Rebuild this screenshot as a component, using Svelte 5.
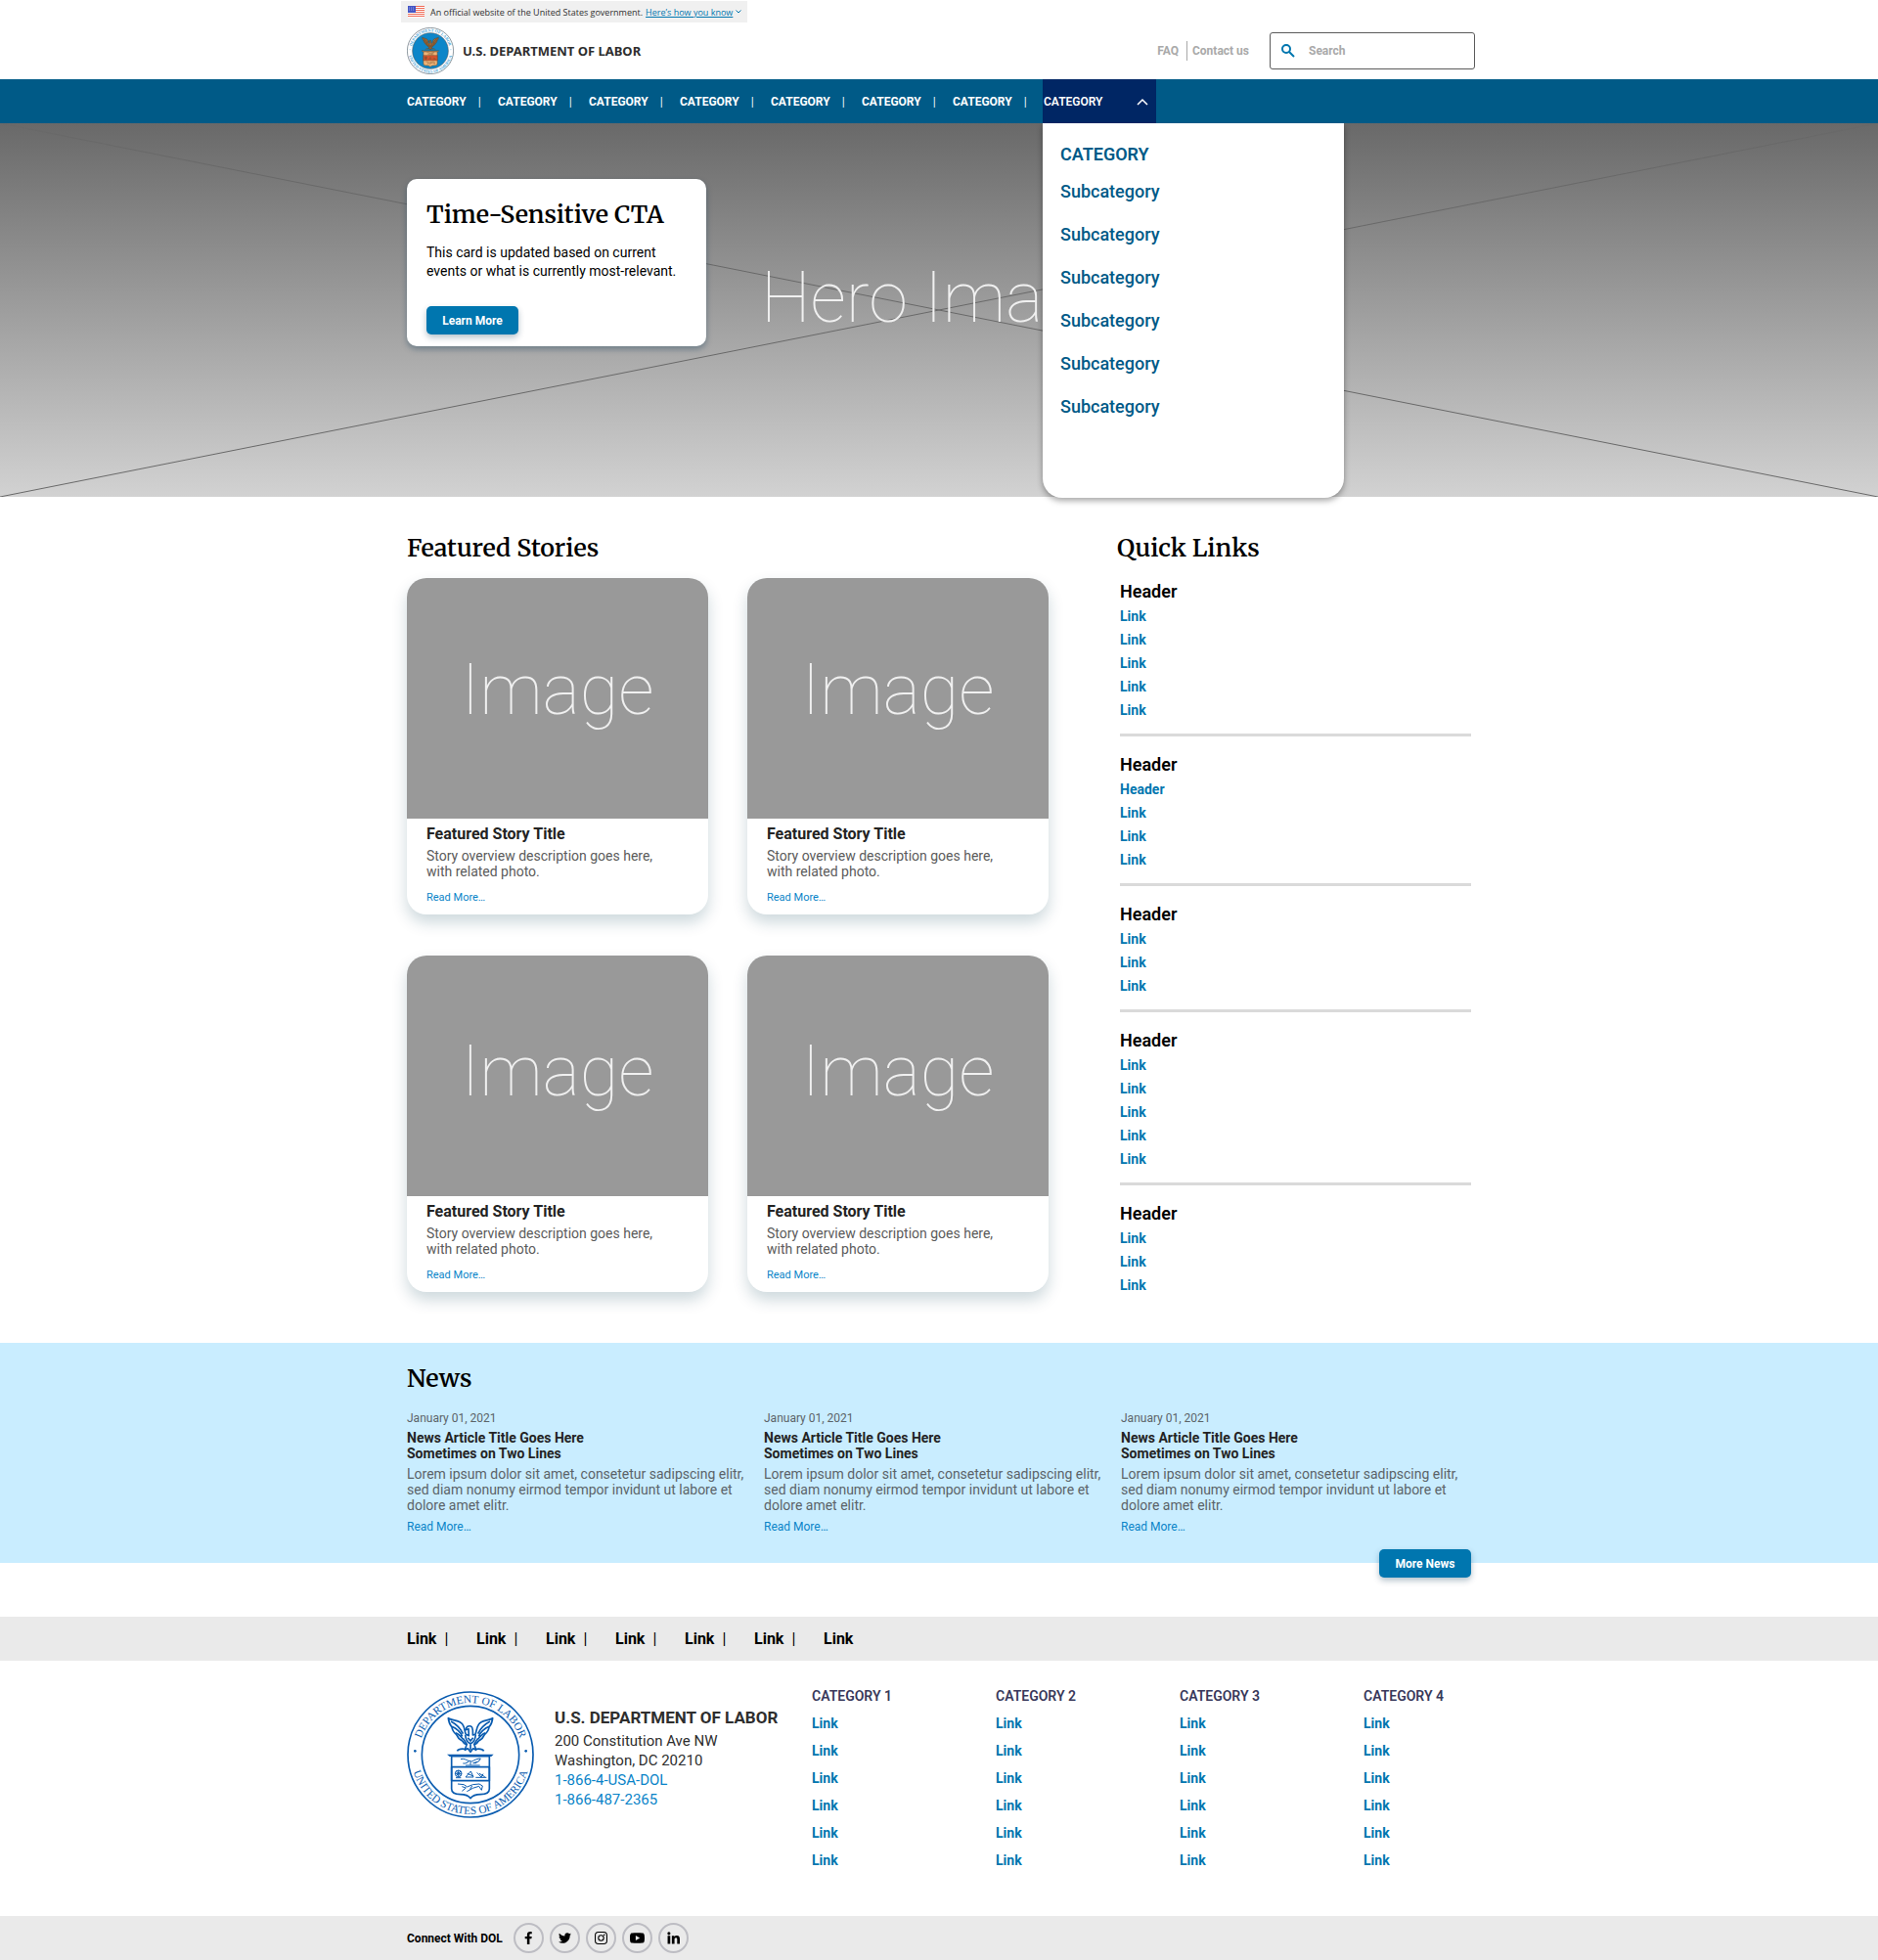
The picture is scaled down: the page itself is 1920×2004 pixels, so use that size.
<script>
  let menuOpen = $state(true);
  let query = $state('');

  const categories = Array(7).fill('CATEGORY');
  const subcategories = Array(6).fill('Subcategory');
  const stories = [1, 2, 3, 4];
  const quickLinks = [
    ['Link', 'Link', 'Link', 'Link', 'Link'],
    ['Header', 'Link', 'Link', 'Link'],
    ['Link', 'Link', 'Link'],
    ['Link', 'Link', 'Link', 'Link', 'Link'],
    ['Link', 'Link', 'Link']
  ];
  const articles = [1, 2, 3];
  const footerBar = Array(7).fill('Link');
  const footerColumns = ['CATEGORY 1', 'CATEGORY 2', 'CATEGORY 3', 'CATEGORY 4'];
  const footerLinks = Array(6).fill('Link');
</script>

{#snippet seal(name)}
  <svg class="seal {name}" viewBox="18 15 390 390" role="img" aria-label="Department of Labor seal">
    <defs>
      <path id="{name}-top" d="M54 210 A159 159 0 0 1 372 210" />
      <path id="{name}-bottom" d="M30 210 A183 183 0 0 0 396 210" />
    </defs>
    <circle class="ring" cx="213" cy="210" r="192" />
    <circle class="disc" cx="213" cy="210" r="149" />
    <text class="ring-text"><textPath href="#{name}-top" startOffset="50%">DEPARTMENT OF LABOR</textPath></text>
    <text class="ring-text"><textPath href="#{name}-bottom" startOffset="50%">UNITED STATES OF AMERICA</textPath></text>
    <circle class="dot" cx="43" cy="199" r="4" />
    <circle class="dot" cx="383" cy="199" r="4" />
    <g class="eagle">
      <path d="M145 98 C158 106 178 104 188 116 C196 126 194 138 199 148 L208 152 L207 131 L199 134 C199 124 207 121 214 123 C220 125 221 132 220 150 L228 148 C232 138 231 126 239 116 C248 104 268 106 281 98 C280 112 275 120 270 126 C269 136 263 143 256 149 C252 158 247 164 238 168 C234 175 229 178 225 180 L230 196 L221 191 L213 202 L205 191 L196 196 L201 180 C197 178 192 175 188 168 C179 164 174 158 170 149 C163 143 157 136 156 126 C151 120 146 112 145 98Z" />
      <path d="M153 108 C168 116 180 124 190 146 M156 124 C170 130 180 138 188 154 M167 143 C175 146 183 152 190 163 M273 108 C258 116 246 124 236 146 M270 124 C256 130 246 138 238 154 M259 143 C251 146 243 152 236 163" />
      <path d="M197 150 C199 166 206 174 213 176 C220 174 227 166 229 150 M205 158 L213 168 L221 158 M190 160 L203 180 M236 160 L223 180 M213 176 V196 M172 199 C177 190 188 192 197 193 M254 199 C249 190 238 192 229 193" />
    </g>
    <path class="shield" d="M155 215 H271 V315 C271 329 258 332 244 332 C230 332 219 336 213 344 C207 336 196 332 182 332 C168 332 155 329 155 315Z" />
    <path class="band" d="M155 248 H271 V290 H155Z" />
    <path class="bar" d="M141 209 H284 L277 216 H149Z" />
    <g class="charges">
      <path d="M183 224 C193 221 200 226 207 229 L217 231 C226 226 235 222 244 222 L238 231 L221 236 H232 M207 232 L197 237 H190 M213 232 V242 M198 243 H242" />
      <circle cx="176" cy="268" r="10" />
      <path d="M166 268 H186 M176 258 V278 M169 261 L183 275 M183 261 L169 275 M168 281 H184 M198 279 L214 261 L222 279Z M203 268 L222 276 M229 280 H262 M233 265 L246 279 L252 269 M240 268 L257 278" />
      <path d="M174 300 L193 302 L203 309 L220 302 L240 300 L250 306 L247 319 L239 307 L220 313 L202 323 M187 308 L199 312 L187 322 M218 306 L211 317" />
    </g>
  </svg>
{/snippet}

<div class="page">
  <header class="masthead">
    <div class="banner">
      <svg class="flag" viewBox="0 0 17 12" aria-hidden="true">
        <path fill="#fff" d="M0 0H17V12H0Z" />
        <path stroke="#ef6a55" d="M0 .5H17M0 2.500H17M0 4.500H17M0 6.500H17M0 8.500H17M0 10.500H17" />
        <path fill="#4556c4" d="M0 0H8V7H0Z" />
        <path stroke="#93a0e8" stroke-dasharray="1 1" d="M1 2H7M1 4H7" />
      </svg>
      <span>An official website of the United States government.</span>
      <a href="#about-site">Here’s how you know</a>
      <svg class="tiny-chevron" viewBox="0 0 6 4" aria-hidden="true"><path d="M0.5 0.5 3 3 5.5 0.5" /></svg>
    </div>
    <div class="brand-row">
      <a class="brand" href="#home">
        {@render seal('color')}
        <span>U.S. DEPARTMENT OF LABOR</span>
      </a>
      <div class="tools">
        <a href="#faq">FAQ</a>
        <a class="contact" href="#contact">Contact us</a>
        <label class="search">
          <svg viewBox="0 0 14 14" aria-hidden="true"><circle cx="5" cy="5" r="4" /><path d="M8 8 13 13" /></svg>
          <input type="search" placeholder="Search" aria-label="Search" bind:value={query} />
        </label>
      </div>
    </div>
  </header>

  <nav class="main-nav" aria-label="Main">
    <ul class="wrap">
      {#each categories as category}
        <li><a href="#category">{category}</a><span class="pipe">|</span></li>
      {/each}
      <li class="menu">
        <button class="menu-toggle" aria-expanded={menuOpen} onclick={() => (menuOpen = !menuOpen)}>
          CATEGORY
          <svg viewBox="0 0 12 8" aria-hidden="true"><path d="M1 7 6 2 11 7" /></svg>
        </button>
        {#if menuOpen}
          <div class="dropdown">
            <h2>CATEGORY</h2>
            {#each subcategories as sub}
              <a href="#subcategory">{sub}</a>
            {/each}
          </div>
        {/if}
      </li>
    </ul>
  </nav>

  <section class="hero">
    <svg class="cross" viewBox="0 0 100 100" preserveAspectRatio="none" aria-hidden="true">
      <path d="M0 0 100 100M0 100 100 0" />
    </svg>
    <div class="placeholder hero-label">Hero Image</div>
    <div class="wrap hero-content">
      <article class="cta">
        <h1>Time-Sensitive CTA</h1>
        <p>This card is updated based on current events or what is currently most-relevant.</p>
        <button class="primary">Learn More</button>
      </article>
    </div>
  </section>

  <main class="wrap main">
    <section class="featured">
      <h2 class="title">Featured Stories</h2>
      <div class="stories">
        {#each stories as story (story)}
          <article class="story">
            <div class="placeholder photo">Image</div>
            <div class="story-text">
              <h3>Featured Story Title</h3>
              <p>Story overview description goes here, with related photo.</p>
              <a href="#story">Read More…</a>
            </div>
          </article>
        {/each}
      </div>
    </section>
    <aside class="quick">
      <h2 class="title">Quick Links</h2>
      {#each quickLinks as group}
        <section>
          <h3>Header</h3>
          <ul>
            {#each group as link}
              <li><a href="#link">{link}</a></li>
            {/each}
          </ul>
        </section>
      {/each}
    </aside>
  </main>

  <section class="news">
    <div class="wrap news-inner">
      <h2 class="title">News</h2>
      <div class="articles">
        {#each articles as article (article)}
          <article>
            <time datetime="2021-01-01">January 01, 2021</time>
            <h3>News Article Title Goes Here<br />Sometimes on Two Lines</h3>
            <p>Lorem ipsum dolor sit amet, consetetur sadipscing elitr, sed diam nonumy eirmod tempor invidunt ut labore et dolore amet elitr.</p>
            <a href="#article">Read More…</a>
          </article>
        {/each}
      </div>
      <button class="primary more">More News</button>
    </div>
  </section>

  <nav class="link-bar" aria-label="Footer">
    <ul class="wrap">
      {#each footerBar as link, i}
        <li><a href="#link">{link}</a>{#if i < footerBar.length - 1}<span>|</span>{/if}</li>
      {/each}
    </ul>
  </nav>

  <footer>
    <div class="wrap footer-main">
      {@render seal('line')}
      <address>
        <strong>U.S. DEPARTMENT OF LABOR</strong>
        <span>200 Constitution Ave NW</span>
        <span>Washington, DC 20210</span>
        <a href="tel:1-866-487-2365">1-866-4-USA-DOL</a>
        <a href="tel:1-866-487-2365">1-866-487-2365</a>
      </address>
      <div class="columns">
        {#each footerColumns as column}
          <section>
            <h3>{column}</h3>
            <ul>
              {#each footerLinks as link}
                <li><a href="#link">{link}</a></li>
              {/each}
            </ul>
          </section>
        {/each}
      </div>
    </div>
    <div class="social-bar">
      <div class="wrap social">
        <span>Connect With DOL</span>
        <a href="#facebook" aria-label="Facebook">
          <svg viewBox="0 0 24 24"><path d="M9 24V13.5H5V9h4V5.8C9 1.9 11.300 0 14.800 0c1.600 0 3.200.3 3.200.3V4h-2c-1.900 0-2.300 1-2.300 2.300V9H18l-.7 4.500h-3.600V24Z" /></svg>
        </a>
        <a href="#twitter" aria-label="Twitter">
          <svg viewBox="0 0 24 24"><path d="M23.953 4.570a10 10 0 01-2.825.775 4.958 4.958 0 002.163-2.723c-.951.555-2.005.959-3.127 1.184a4.920 4.920 0 00-8.384 4.482C7.690 8.095 4.067 6.130 1.640 3.162a4.822 4.822 0 00-.666 2.475c0 1.710.870 3.213 2.188 4.096a4.904 4.904 0 01-2.228-.616v.060a4.923 4.923 0 003.946 4.827 4.996 4.996 0 01-2.212.085 4.936 4.936 0 004.604 3.417 9.867 9.867 0 01-6.102 2.105c-.390 0-.779-.023-1.170-.067a13.995 13.995 0 007.557 2.209c9.053 0 13.998-7.496 13.998-13.985 0-.210 0-.420-.015-.630A9.935 9.935 0 0024 4.590z" /></svg>
        </a>
        <a href="#instagram" aria-label="Instagram">
          <svg viewBox="0 0 24 24"><rect class="outline" x="1" y="1" width="22" height="22" rx="6" /><circle class="outline" cx="12" cy="12" r="5" /><circle cx="18" cy="6" r="1.500" /></svg>
        </a>
        <a href="#youtube" aria-label="YouTube">
          <svg class="wide" viewBox="0 0 28 20"><path fill-rule="evenodd" d="M4 .5C10 0 18 0 24 .5 27 .8 28 3 28 10s-1 9.200-4 9.500C18 20 10 20 4 19.500 1 19.200 0 17 0 10S1 .8 4 .5ZM11 5.500v9l8-4.500Z" /></svg>
        </a>
        <a href="#linkedin" aria-label="LinkedIn">
          <svg viewBox="0 0 24 24"><path d="M1 8H6V23H1ZM3.500 .5a2.900 2.900 0 1 1 0 5.800 2.900 2.900 0 0 1 0-5.800ZM9 8h4.800v2.100c.8-1.500 2.500-2.500 4.700-2.500C22.700 7.600 24 10.200 24 14.300V23h-5v-7.800c0-1.900-.1-3.500-2.300-3.500S14 13.300 14 15.200V23H9Z" /></svg>
        </a>
      </div>
    </div>
  </footer>
</div>

<style>
  :global(body) {
    margin: 0;
    background: #fff;
  }

  .page {
    font-family: Roboto, 'Liberation Sans', sans-serif;
    font-size: 14px;
    color: #000;
  }

  h1, h2, h3, p, ul {
    margin: 0;
    padding: 0;
  }

  ul {
    list-style: none;
  }

  a {
    color: #0076af;
    text-decoration: none;
  }

  button {
    border: 0;
    font-family: inherit;
    cursor: pointer;
  }

  svg {
    display: block;
    flex: none;
  }

  .wrap {
    box-sizing: border-box;
    width: 100%;
    max-width: 1088px;
    margin: 0 auto;
  }

  .title, .cta h1 {
    font-family: Merriweather, 'Liberation Serif', serif;
    font-size: 25px;
    line-height: 32px;
    font-weight: 600;
  }

  .placeholder {
    color: #f0f0f0;
    font-size: 72px;
    line-height: 84px;
    font-weight: 100;
  }

  .primary {
    min-width: 94px;
    height: 29px;
    padding: 0 16px;
    border-radius: 5px;
    background: #0076af;
    color: #fff;
    font-size: 12px;
    font-weight: 700;
    box-shadow: 0 3px 6px rgba(0, 50, 80, 0.3);
  }

  /* Masthead */
  .masthead {
    box-sizing: border-box;
    max-width: 1100px;
    margin: 0 auto;
    padding: 1px 2px 5px 0;
  }

  .banner {
    display: flex;
    align-items: center;
    box-sizing: border-box;
    width: max-content;
    height: 22px;
    padding: 0 6px 0 7px;
    background: #f0f0f0;
    color: #2e2e2e;
    font-family: 'Source Sans Pro', 'Open Sans', sans-serif;
    font-size: 9px;
  }

  .banner a {
    margin: 0 3px;
    text-decoration: underline;
  }

  .flag {
    width: 17px;
    height: 12px;
    margin-right: 6px;
  }

  .tiny-chevron {
    width: 6px;
    height: 4px;
    fill: none;
    stroke: #0076af;
  }

  .brand-row {
    display: flex;
    justify-content: space-between;
    align-items: center;
    height: 49px;
    margin-top: 4px;
    padding-left: 6px;
  }

  .brand {
    display: flex;
    align-items: center;
    gap: 9px;
    color: #2e2e2e;
    font-family: 'Source Sans Pro', 'Noto Sans', sans-serif;
    font-size: 13px;
    font-weight: 700;
  }

  .tools {
    display: flex;
    align-items: center;
    font-size: 12px;
    font-weight: 700;
  }

  .tools a {
    color: #a9a9a9;
    line-height: 20px;
  }

  .tools .contact {
    margin: 0 21px 0 8px;
    padding-left: 5px;
    border-left: 1px solid #a9a9a9;
  }

  .search {
    display: flex;
    align-items: center;
    gap: 14px;
    box-sizing: border-box;
    width: 210px;
    height: 38px;
    padding: 0 11px;
    border: 1px solid #5b5b5b;
    border-radius: 3px;
  }

  .search svg {
    width: 14px;
    height: 14px;
    fill: none;
    stroke: #0076af;
    stroke-width: 2;
  }

  .search input {
    flex: 1;
    min-width: 0;
    padding: 0;
    border: 0;
    outline: 0;
    background: none;
    font: inherit;
  }

  .search input::placeholder {
    color: #a9a9a9;
    opacity: 1;
  }

  /* Seal */
  .seal .ring, .seal .disc {
    fill: #fff;
    stroke-width: 5;
  }

  .ring-text {
    font-family: 'Liberation Serif', serif;
    font-size: 34px;
    text-anchor: middle;
  }

  .seal path {
    stroke-linejoin: round;
  }

  .line {
    width: 130px;
    height: 130px;
  }

  .line .ring, .line .disc {
    stroke: #0a5cb0;
  }

  .line .ring-text, .line .dot, .line .bar {
    fill: #0a5cb0;
  }

  .line .eagle, .line .shield, .line .band, .line .charges {
    fill: none;
    stroke: #0a5cb0;
    stroke-width: 5;
  }

  .line .charges {
    stroke-width: 3;
  }

  .color {
    width: 48px;
    height: 48px;
  }

  .color .ring, .color .disc {
    stroke: #4d5d68;
  }

  .color .disc {
    fill: #0c86c9;
  }

  .color .ring-text, .color .dot {
    fill: #4aa5d8;
  }

  .color .eagle {
    fill: #9a6a3c;
    stroke: #50381f;
    stroke-width: 3;
  }

  .color .shield, .color .bar {
    fill: #eeb377;
    stroke: #5c4020;
    stroke-width: 4;
  }

  .color .band {
    fill: #d9552f;
    stroke: #5c4020;
    stroke-width: 3;
  }

  .color .charges {
    fill: none;
    stroke: #74502c;
    stroke-width: 3;
  }

  /* Main navigation */
  .main-nav {
    background: #005a87;
  }

  .main-nav ul {
    display: flex;
    height: 45px;
  }

  .main-nav li {
    display: flex;
    align-items: center;
    width: 93px;
    font-size: 12px;
    font-weight: 700;
  }

  .main-nav li > a {
    color: #fff;
  }

  .pipe {
    margin-left: 12px;
    color: #e4f0f5;
    font-weight: 500;
  }

  .main-nav .menu {
    position: relative;
    width: 116px;
    margin-left: -1px;
  }

  .menu-toggle {
    display: flex;
    align-items: center;
    justify-content: space-between;
    width: 100%;
    height: 100%;
    padding: 0 8px 0 1px;
    background: #002664;
    color: #fff;
    font-size: 12px;
    font-weight: 600;
  }

  .menu-toggle svg {
    width: 12px;
    height: 8px;
    fill: none;
    stroke: #fff;
    stroke-width: 1.5;
  }

  .dropdown {
    position: absolute;
    z-index: 2;
    top: 100%;
    left: 0;
    display: flex;
    flex-direction: column;
    box-sizing: border-box;
    width: 308px;
    padding: 16px 18px 71px;
    border-radius: 0 0 20px 20px;
    background: #fff;
    color: #005a87;
    font-size: 18px;
    box-shadow: 0 3px 6px rgba(0, 0, 0, 0.35);
    clip-path: inset(0 -12px -12px);
  }

  .dropdown h2 {
    font-size: 18px;
    line-height: 32px;
    font-weight: 600;
  }

  .dropdown a {
    color: #005a87;
    line-height: 44px;
    font-weight: 500;
  }

  /* Hero */
  .hero {
    position: relative;
    background: linear-gradient(#696969, #d2d2d2);
  }

  .cross {
    position: absolute;
    inset: 0;
    width: 100%;
    height: 100%;
    fill: none;
    stroke: #696969;
  }

  .cross path {
    vector-effect: non-scaling-stroke;
  }

  .hero-label {
    position: absolute;
    inset: 0 0 24px;
    display: grid;
    place-items: center;
  }

  .hero-content {
    position: relative;
    padding: 57px 0 154px;
  }

  .cta {
    box-sizing: border-box;
    width: 306px;
    padding: 20px 20px 12px;
    border-radius: 10px;
    background: #fff;
    box-shadow: 0 3px 6px rgba(0, 50, 80, 0.35);
  }

  .cta p {
    margin: 14px 0 26px;
    line-height: 19px;
  }

  .cta .primary {
    display: block;
  }

  /* Stories and quick links */
  .main {
    display: flex;
    justify-content: space-between;
    padding: 36px 0 47px;
  }

  .title {
    margin-bottom: 15px;
  }

  .stories {
    display: grid;
    grid-template-columns: 308px 308px;
    gap: 42px 40px;
  }

  .story {
    border-radius: 20px;
    background: #fff;
    box-shadow: 0 8px 16px rgba(0, 60, 80, 0.2);
  }

  .photo {
    display: grid;
    place-items: center;
    box-sizing: border-box;
    height: 246px;
    padding-bottom: 16px;
    border-radius: 20px 20px 0 0;
    background: #999;
  }

  .story:nth-child(n + 3) .photo {
    padding-bottom: 8px;
  }

  .story-text {
    padding: 6px 20px 9px;
  }

  .story h3 {
    color: #232323;
    font-size: 16px;
    line-height: 20px;
  }

  .story p {
    max-width: 240px;
    margin: 4px 0 11px;
    color: #5b5b5b;
    line-height: 16px;
  }

  .story a {
    display: block;
    color: #0a84c8;
    font-size: 11px;
    line-height: 16px;
  }

  .quick {
    width: 359px;
  }

  .quick .title {
    margin-left: -3px;
  }

  .quick section + section {
    margin-top: 12px;
    padding-top: 15px;
    border-top: 3px solid #dadada;
  }

  .quick h3 {
    font-size: 18px;
    line-height: 27px;
    font-weight: 600;
  }

  .quick li {
    line-height: 24px;
    font-weight: 700;
  }

  /* News */
  .news {
    background: #c9edff;
  }

  .news-inner {
    position: relative;
    padding: 20px 0 27px;
  }

  .articles {
    display: grid;
    grid-template-columns: repeat(3, 1fr);
    gap: 7px;
  }

  .articles article {
    padding-right: 8px;
  }

  .news time, .news article a {
    display: block;
    font-size: 12px;
    line-height: 20px;
  }

  .news time {
    color: #5b6368;
  }

  .news article a {
    color: #0a84c8;
  }

  .news h3 {
    margin: 2px 0 5px;
    color: #232323;
    font-size: 14px;
    line-height: 16px;
  }

  .news p {
    margin-bottom: 4px;
    color: #5b6368;
    line-height: 16px;
  }

  .more {
    position: absolute;
    right: 0;
    bottom: -15px;
  }

  /* Footer */
  .link-bar {
    margin-top: 55px;
    background: #eaeaea;
  }

  .link-bar ul {
    display: flex;
    align-items: center;
    height: 45px;
    font-size: 16px;
  }

  .link-bar li {
    width: 71px;
  }

  .link-bar a {
    color: #000;
    font-weight: 700;
  }

  .link-bar span {
    margin-left: 8px;
  }

  .footer-main {
    display: flex;
    padding: 22px 0 43px;
  }

  .footer-main .seal {
    margin-top: 9px;
  }

  address {
    display: flex;
    flex: none;
    flex-direction: column;
    width: 284px;
    padding: 24px 0 0 21px;
    box-sizing: border-box;
    color: #2e2e2e;
    font-size: 15px;
    line-height: 20px;
    font-style: normal;
    white-space: nowrap;
  }

  address strong {
    margin-bottom: 2px;
    font-size: 17px;
    line-height: 24px;
  }

  address a {
    color: #0a84c8;
  }

  .columns {
    display: grid;
    flex: 1;
    grid-template-columns: repeat(4, 1fr);
    gap: 78px;
    line-height: 28px;
  }

  .columns h3 {
    color: #38385a;
    font-size: 14px;
    font-weight: 600;
    white-space: nowrap;
  }

  .columns li {
    font-weight: 700;
  }

  .social-bar {
    background: #eaeaea;
  }

  .social {
    display: flex;
    align-items: center;
    gap: 6px;
    height: 45px;
    font-size: 12px;
    font-weight: 700;
  }

  .social span {
    margin-right: 5px;
  }

  .social a {
    display: grid;
    place-items: center;
    box-sizing: border-box;
    width: 31px;
    height: 31px;
    border: 2px solid #bdbdc3;
    border-radius: 50%;
  }

  .social svg {
    width: 13px;
    height: 13px;
  }

  .social .wide {
    width: 15px;
    height: 11px;
  }

  .social .outline {
    fill: none;
    stroke: #000;
    stroke-width: 2;
  }
</style>
